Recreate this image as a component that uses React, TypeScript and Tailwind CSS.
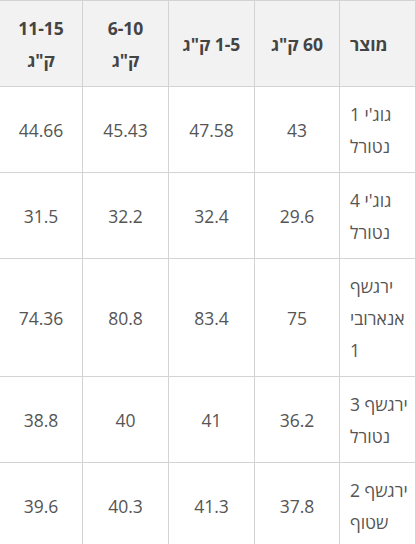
const headers = ["מוצר", "60 ק\"ג", "1-5 ק\"ג", "6-10 ק\"ג", "11-15 ק\"ג"];

const rows: [string, string, string, string, string][] = [
  ["גוג'י 1 נטורל", "43", "47.58", "45.43", "44.66"],
  ["גוג'י 4 נטורל", "29.6", "32.4", "32.2", "31.5"],
  ["ירגשף אנארובי 1", "75", "83.4", "80.8", "74.36"],
  ["ירגשף 3 נטורל", "36.2", "41", "40", "38.8"],
  ["ירגשף 2 שטוף", "37.8", "41.3", "40.3", "39.6"],
];

const widths = ["w-[76px]", "w-[85px]", "w-[86px]", "w-[86px]", "w-[83px]"];

export default function App() {
  return (
    <div dir="rtl" className="h-[544px] w-[416px] overflow-hidden bg-white font-['Open_Sans','DejaVu_Sans',sans-serif]">
      <table className="w-[417px] table-fixed border-collapse text-[17.5px] leading-[32px]">
        <colgroup>
          {widths.map((w, i) => (
            <col key={i} className={w} />
          ))}
        </colgroup>
        <thead>
          <tr className="bg-[#f2f2f2]">
            {headers.map((h, i) => (
              <th
                key={h}
                className={`border border-[#d3d3d3] py-[10.5px] font-bold text-[#444] ${i === 0 ? "pl-[10px] pr-[2px] text-left" : "px-[10px] text-center"}`}
              >
                {h}
              </th>
            ))}
          </tr>
        </thead>
        <tbody>
          {rows.map((row) => (
            <tr key={row[0]}>
              {row.map((cell, i) => (
                <td
                  key={i}
                  className={`border border-[#d3d3d3] py-[10.5px] text-[#555] ${i === 0 ? "pl-[10px] pr-[2px] text-left" : "px-[10px] text-center"}`}
                >
                  {cell}
                </td>
              ))}
            </tr>
          ))}
        </tbody>
      </table>
    </div>
  );
}
